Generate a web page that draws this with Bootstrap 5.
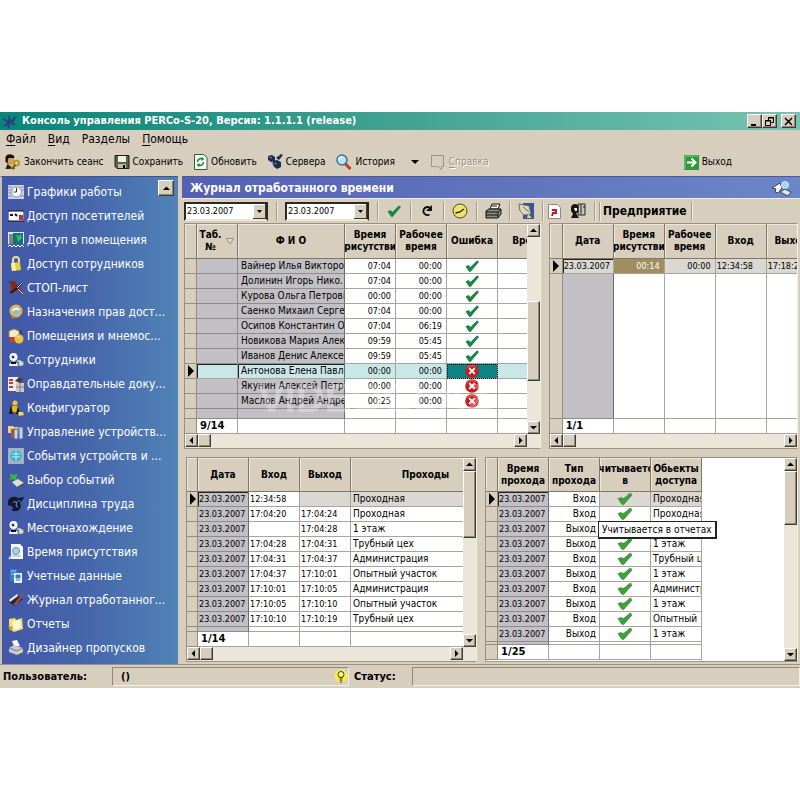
<!DOCTYPE html>
<html lang="ru">
<head>
<meta charset="utf-8">
<meta name="viewport" content="width=device-width, initial-scale=1">
<title>Консоль управления PERCo-S-20</title>
<link rel="stylesheet" href="https://cdn.jsdelivr.net/npm/bootstrap@5.3.0/dist/css/bootstrap.min.css">
<style>
:root{--face:#d8cebd;--line:#a8a59c;--dark:#6e675b}
body{background:#fff;padding:112px 0;font-family:"DejaVu Sans Condensed","DejaVu Sans",sans-serif;font-size:10px;line-height:14px;color:#000}
.app{background:var(--face)}
.titlebar{background:linear-gradient(90deg,#08857a,#3c9f8f 45%,#78c4b2);height:18px;color:#fff;font-size:11px;font-weight:700}
.face-btn{background:var(--face);border:1px solid;border-color:#fff #403c34 #403c34 #fff;box-shadow:inset -1px -1px 0 #8f8778;padding:0;display:flex;align-items:center;justify-content:center;flex:none;color:#000}
.win-btn{width:15px;height:14px}
.menu-row{gap:12px;padding:0 6px;height:18px}
.menu-link{font-size:12px;color:#000;text-decoration:none}
.menu-link u,.tool-btn u{text-underline-offset:2px}
.bar-tools{height:28px}
.tools-left{gap:10px}
.tool-btn{border:0;background:none;padding:0;display:flex;align-items:center;gap:3px;color:#000;font-size:10px;white-space:nowrap}
.tool-btn:disabled{color:#9b9384;text-shadow:1px 1px 0 #fff}
.exit-btn{margin-right:64px}
.side{width:178px;flex:none;background:linear-gradient(90deg,#4257a7,#4667ab 50%,#5083b6);border-left:2px solid #c9c2b4;padding:3px 0 4px 6px;border-top:1px solid #3d529c}
.side-link{display:flex;align-items:center;gap:3px;height:24px;color:#fff;text-decoration:none;font-size:12px;white-space:nowrap}
.side-up{position:absolute;right:4px;top:3px;width:16px;height:16px}
.section-bar{background:linear-gradient(90deg,#5461b3,#6c86c6);height:22px;color:#fff;font-size:12px;font-weight:700;border-top:1px solid #4b58a8}
.strip{height:25px;border-top:1px solid #f3eee4;padding-left:2px}
.date-box{width:84px;height:19px;border:2px solid;border-color:#2b2822 #2b2822 #eee6d8 #2b2822;border-radius:0;padding:0 0 0 1px;font-size:9px;line-height:14px;appearance:none;background:#fff url("data:image/svg+xml,%3Csvg xmlns='http://www.w3.org/2000/svg' width='13' height='15'%3E%3Cpath d='M0 0h13v15H0z' fill='%23403c34'/%3E%3Cpath d='M0 0h12v14H0z' fill='%23fff'/%3E%3Cpath d='M1 1h11v13H1z' fill='%23d8cebd'/%3E%3Cpath d='M4 6h5L6.500 9z'/%3E%3C/svg%3E") no-repeat right center}
.cell-btn{border:0;border-left:1px solid #a39b8c;box-shadow:inset 1px 0 0 #f1ebe0;background:none;height:19px;width:33px;padding:0;display:flex;align-items:center;justify-content:center}
.thin{width:24px}
.rule{width:1px;height:19px;background:#a39b8c;box-shadow:1px 0 0 #f1ebe0}
.org{font-size:12px;font-weight:700;padding-left:3px}
.row-a{padding:0 2px}
.row-b{padding:0 2px 2px 4px;margin-top:8px}
.pane{border:1px solid #988f7f;border-right-color:#f6f1e7;border-bottom-color:#a09683;min-width:0;background:#fff}
.pane-a{flex:357 1 0}.pane-b{flex:249 1 0}.pane-c{flex:290 1 0}.pane-d{flex:312 1 0}
.view{overflow:hidden;min-width:0;flex:1 1 0}
.sheet{table-layout:fixed;border-collapse:separate;border-spacing:0;width:0}
.sheet th,.sheet td{border-right:1px solid var(--line);border-bottom:1px solid var(--line);padding:0 3px;white-space:nowrap;overflow:hidden;line-height:12px}
.sheet th{background:var(--face);height:34px;font-weight:700;text-align:center;vertical-align:middle;padding:0;box-shadow:inset 1px 1px 0 #efe8dc;border-color:#7e776a}
.pane-top .sheet th{height:35px}
.sheet th>span{display:flex;flex-direction:column;align-items:center}
.sheet td{height:15px;background:#fff;vertical-align:middle}
.sheet td:first-child{background:var(--face);padding:0;border-color:#968d7e}
.sheet td.lock{background:#c2c0c4;border-color:#8d8b8e}
.sheet td.n{text-align:right;font-size:9px;padding:0 4px 0 0}
.sheet td.w{text-align:right}
.sheet td.d{font-size:9px;padding:0 1px}
.sheet td.c{text-align:center;padding:0}
.sheet td.o{padding:0 0 0 2px}
.sheet td.edge{border-right-color:#6d6b6e}
.sheet tr.now td.d,.sheet tr.now td.box{box-shadow:inset 1px 1px 0 #222}
.sheet tr.now td.plain{box-shadow:none}
.sheet tr.soft td:not(:first-child):not(.lock):not(.keep){background:#dbd7d1}
.sheet tr.pick td:not(:first-child){background:#c9e7e9}
.sheet tr.pick td.hot{background:#0f8285;outline:1px dotted #000;outline-offset:-1px}
.sheet tr.soft td.gold:not(:first-child):not(.lock):not(.keep){background:#a08d60;color:#fff}
.sheet tr.rest td{height:10px}
.sheet tr.tall td{height:145px}
.sheet tr.slim td{height:5px;line-height:1px}
.pane-d .sheet tr.slim td{height:3px}
.sheet tr.total td{font-family:"DejaVu Sans",sans-serif;font-size:10px;font-weight:700;background:#fff;height:15px}
.sheet tr.total td:first-child{background:var(--face)}
.sheet svg{display:block;margin:0 auto}
.vbar,.hbar{background:#ece6da;flex:none;display:flex}
.vbar{width:13px;flex-direction:column}
.hbar{height:14px}
.knob{width:13px;height:13px}
.corner{margin-right:13px}
.arr{width:7px;height:7px}
.gap-up{flex:65 1 0}.thumb-a{flex:79 1 0;width:13px}.gap-dn{flex:40 1 0}
.thumb-c{flex:66 1 0;width:13px}.gap-c{flex:97 1 0}
.thumb-d{flex:52 1 0;width:13px}.gap-d{flex:124 1 0}
.tip-box{position:absolute;left:112px;top:63px;background:#fff;border:1px solid #222;border-right-width:2px;border-bottom-width:2px;padding:0 3px;line-height:15px;white-space:nowrap}
.brandmark{position:absolute;left:76px;top:153px;font:700 40px/44px "Liberation Sans",sans-serif;color:#fff;opacity:.28;pointer-events:none}
.status{height:24px;border-top:1px solid #9b927f;font-size:11px;font-weight:700}
.well{border:1px solid;border-color:#8f8778 #f6f1e7 #f6f1e7 #8f8778;height:19px}
.well-user{width:237px}
.label-user{width:112px;padding-left:3px}
.label-stat{width:63px;padding-left:5px}
</style>
</head>
<body>
<svg width="0" height="0" class="d-none" aria-hidden="true">
<symbol id="ok" viewBox="0 0 14 13"><path d="M2 7.500 5 12.500 14 2 12 1 6 7z" fill="#51707c"/><path d="M.5 6.500 3.500 5 5.500 7 12 .5l1.500 1L5.500 11.500H4z" fill="#17893a"/></symbol>
<symbol id="ok2" viewBox="0 0 16 14"><path d="M3 8 6 13.500 15.500 3 14 2z" fill="#5c7b8c"/><path d="M.5 6.500 4 5 6.500 6.500 12.500 1 15 1.500 7.500 12 4.500 12.500z" fill="#3fa03a"/></symbol>
<symbol id="bad" viewBox="0 0 16 15"><circle cx="8" cy="7.500" r="7.300" fill="#c81e22"/><path d="M3 4a6 5 0 0 1 9-1" stroke="#ef7470" fill="none"/><path d="m5 4.500 6 6m0-6-6 6" stroke="#fff" stroke-width="2"/></symbol>
<symbol id="up" viewBox="0 0 7 7"><path d="M0 5h7L3.500 1.500z"/></symbol>
<symbol id="dn" viewBox="0 0 7 7"><path d="M0 2h7L3.500 5.500z"/></symbol>
<symbol id="lt" viewBox="0 0 7 7"><path d="M5 0v7L1.500 3.500z"/></symbol>
<symbol id="rt" viewBox="0 0 7 7"><path d="M2 0v7L5.500 3.500z"/></symbol>
<symbol id="mark-row" viewBox="0 0 7 12"><path d="M1 0v12l6-6z"/></symbol>
<symbol id="i-sched" viewBox="0 0 16 16"><path d="M0 1h16v14H0z" fill="#cbd3e4"/><path d="M0 3h4M0 6h4M0 9h4M0 12h4M12 3h4M12 6h4M12 12h4" stroke="#8791ad"/><circle cx="8.500" cy="8" r="5" fill="#fff" stroke="#8790a8"/><path d="M8.500 4v4H5.500" stroke="#333" fill="none"/></symbol>
<symbol id="i-guest" viewBox="0 0 16 16"><path d="M0 3h16v10H0z" fill="#fff" stroke="#111"/><path d="M2 7h3M7 6l2 2" stroke="#111" stroke-width="2"/><path d="M11 7h4v5h-4z" fill="#c22b44"/></symbol>
<symbol id="i-room" viewBox="0 0 16 16"><path d="M0 0h16v12H0z" fill="#dfeaf0"/><path d="M5 1h10v11H5z" fill="#16706b"/><path d="m8 2 2 2 3-2 1 4-4 4z" fill="#2fbd78"/><path d="M2 2v10M4 2v10" stroke="#123"/><path d="m0 14 2-1 2 2 2-2 2 2 2-2 2 2 2-2 2 2" stroke="#fff" fill="none"/></symbol>
<symbol id="i-lock" viewBox="0 0 16 16"><path d="M5 8V4c0-4 6-4 6 0v4" stroke="#e9dca0" stroke-width="2" fill="none"/><path d="m3 7 9-1 1 8-9 1z" fill="#eacb3c"/><path d="m3 7 4-.500 1 8-4 .5z" fill="#fbec96"/></symbol>
<symbol id="i-stop" viewBox="0 0 16 16"><path d="m1 1 6 0 2 4 5 6 1 4-4-3-4-3-4 4-2 0 3-5z" fill="#7e2c18"/><path d="m14 3-6 6-5 4" stroke="#201a1c" stroke-width="2"/><path d="M9 8 14 3M10 9l5 5" stroke="#ddd"/></symbol>
<symbol id="i-right" viewBox="0 0 16 16"><circle cx="8" cy="7" r="5" fill="#82bfe4" stroke="#e5b254" stroke-width="3"/><path d="M5 7c1-3 4-3 6-1" stroke="#fff" fill="none" stroke-width="2"/><path d="m3 11 1 4 4-2" fill="#c17a35"/></symbol>
<symbol id="i-map" viewBox="0 0 16 16"><path d="m1 3 5-2 5 2v6l-5 2-5-2z" fill="#f5edcf" stroke="#a08444"/><path d="M1 9h6v5H2z" fill="#b5472a"/><circle cx="11" cy="11" r="4.500" fill="#f0bf35"/><path d="M9 9a3 3 0 0 1 3 0" stroke="#fff"/><path d="M12 2l2 4" stroke="#222"/></symbol>
<symbol id="i-staff" viewBox="0 0 16 16"><circle cx="5.500" cy="5" r="4" fill="#fff"/><path d="M1 14c0-6 9-6 9 0z" fill="#f1f3f5"/><circle cx="5" cy="5" r="1.500" fill="#29406c"/><path d="M3 11h5" stroke="#111" stroke-width="2"/><circle cx="13" cy="11.500" r="2.500" fill="#d4d8a2"/><path d="M9 9h4" stroke="#fff"/></symbol>
<symbol id="i-doc" viewBox="0 0 16 16"><path d="M0 1h11v14H0z" fill="#f3ede6"/><path d="M1 4h4M1 7h4M1 11h4" stroke="#b33d3c" stroke-width="2"/><path d="m7 5 4-4 4 2-3 4z" fill="#4b3b3a"/><path d="M8 7h8v9H8z" fill="#c9c9c4"/><path d="M12 7v9M8 11h8" stroke="#8d7b75"/></symbol>
<symbol id="i-conf" viewBox="0 0 16 16"><circle cx="7" cy="3" r="2.500" fill="#f1ca29"/><path d="M4 6h6l1 6H4z" fill="#e9b912"/><path d="M3 5 1 14h4zM10 6l2 8H8z" fill="#161616"/><path d="m10 12 5 0 1 3-5 1z" fill="#f3dc4c"/></symbol>
<symbol id="i-dev" viewBox="0 0 16 16"><path d="M0 2h5l1 1h5v6H0z" fill="#efcf7a"/><path d="M3 5h6v9H3z" fill="#a7593a"/><path d="M6 5h4v10H6zM11 3h4v12h-4z" fill="#c7d4e6" stroke="#55698d"/></symbol>
<symbol id="i-ev" viewBox="0 0 16 16"><path d="M0 0h16v16H0z" fill="#a3b3bf"/><circle cx="8" cy="8" r="5.500" fill="#2eb0cf"/><path d="M4 6h8M4 9h8M8 3v10" stroke="#c9f4fa"/></symbol>
<symbol id="i-sel" viewBox="0 0 16 16"><path d="m2 1 3 2 5-1-2 3 1 4-4-2-4 1 2-3z" fill="#2fbc3d"/><path d="m4 10 6-3 6 4-7 4z" fill="#dcdcd2"/><path d="m9 15 7-4v2l-6 3z" fill="#47525e"/></symbol>
<symbol id="i-disc" viewBox="0 0 16 16"><path d="M0 5c2-5 7-5 10-3l6-1-2 4-2 1 1 5-3 4H4L5 11 0 9z" fill="#101a30"/><path d="m5 6 4 0-1 4 2 1M10 5l2 0" stroke="#7893b9" fill="none"/></symbol>
<symbol id="i-time" viewBox="0 0 16 16"><path d="M3 0h9l3 3v12H3z" fill="#f7f9fb"/><circle cx="8" cy="7" r="3.500" fill="#a5d1ec" stroke="#6c8eac"/><path d="m1 15 4-5" stroke="#c7d6e5" stroke-width="2"/><path d="M5 12h8" stroke="#9ab"/></symbol>
<symbol id="i-data" viewBox="0 0 16 16"><path d="M2 1h7v12H2z" fill="#2c82cb"/><path d="M3 3h5M3 6h5" stroke="#9fd2f5"/><path d="M6 5h8v10H6z" fill="#edf3f8"/><path d="M8 7h4v3H8zM8 12h4" fill="#3c7ab7" stroke="#3c7ab7"/></symbol>
<symbol id="i-jour" viewBox="0 0 16 16"><path d="m0 9 9-6 6 4-9 7z" fill="#212940"/><path d="m1 8 8-6 1 2-8 6z" fill="#e6e9ee"/><path d="m5 13 9-11 2 1-8 10z" fill="#b8473d"/></symbol>
<symbol id="i-rep" viewBox="0 0 16 16"><path d="m1 3 6-1 1 2 6-2 1 11-9 3-5-3z" fill="#f3dc72"/><path d="m4 5 8-1 1 8-7 2z" fill="#fffbd5"/><path d="m0 10 5 1-2 4z" fill="#c9982c"/></symbol>
<symbol id="i-print" viewBox="0 0 16 16"><path d="m4 1 5-1 3 6H6z" fill="#fff"/><path d="m1 8 5-3 9 3v4l-6 3-8-3z" fill="#c6cad0"/><path d="m1 8 8 3 6-3" stroke="#757c88" fill="none"/><path d="m9 12 5-2v2l-5 2z" fill="#eadb77"/></symbol>
<symbol id="t-key" viewBox="0 0 16 16"><path d="M1 3c2-4 8-3 9 0L9 5 5 4 4 10 1 8z" fill="#15110d"/><path d="M4 4h5l1 4-2 3H5L3 8z" fill="#d9a24a"/><path d="M1 15 3 10l4 3-1 2z" fill="#26231f"/><circle cx="12" cy="9" r="2.500" fill="none" stroke="#b89a1d" stroke-width="2"/><path d="m11 11-4 4m1-2 2 2" stroke="#73610c" stroke-width="2"/></symbol>
<symbol id="t-save" viewBox="0 0 16 16"><path d="M1 1.500h14v13H3l-2-2z" fill="#5b6442" stroke="#1c1f14"/><path d="M4 2h8v6H4z" fill="#eef0e4"/><path d="M4 10h8v4H4z" fill="#b9bdaa"/><path d="M9 11h2v3H9z"/></symbol>
<symbol id="t-upd" viewBox="0 0 14 16"><path d="M1 .5h9l3.500 3v12H1z" fill="#fbfff8" stroke="#3c5a43"/><path d="M4 8c0-3 3-4 5-3M10 8c0 3-3 4-5 3" stroke="#1b8a32" stroke-width="1.500" fill="none"/><path d="m8 3 3 2-3 2zM6 9v4l-3-2z" fill="#1b8a32"/></symbol>
<symbol id="t-srv" viewBox="0 0 16 16"><g fill="#1c2c4c"><path d="m1 2 4-1 3 2v4L4 8 1 6z"/><path d="m6 7 4-1 4 2v5l-4 2-4-3z"/><path d="m9 4 5-4 2 1-4 5z"/></g><path d="m2 3 3 1M7 9l3 1M5 8l2 5M10 3l3-2" stroke="#6f8dc0"/></symbol>
<symbol id="t-his" viewBox="0 0 16 16"><circle cx="6.500" cy="6" r="5" fill="#b6e3f5" stroke="#35708e" stroke-width="1.500"/><path d="M3 6c0-2 2-3 4-3" stroke="#fff" stroke-width="1.500" fill="none"/><path d="m10 10 5 5" stroke="#c23a24" stroke-width="3"/></symbol>
<symbol id="t-help" viewBox="0 0 16 16"><path d="M1.500 1.500h12v11h-2v3l-4-3h-6z" fill="none" stroke="#9b9384"/></symbol>
<symbol id="t-exit" viewBox="0 0 15 15"><path d="M0 0h15v15H0z" fill="#2f9a3c"/><path d="M1 1h13M1 1v13" stroke="#7fcf80"/><path d="M3 7.500h8M7.500 3.500l4 4-4 4" stroke="#fff" stroke-width="2" fill="none"/></symbol>
</svg>

<div class="app">
  <header>
    <div class="titlebar d-flex align-items-center pe-1">
      <svg width="18" height="16" viewBox="0 0 18 16" aria-hidden="true"><path d="M8 15 6 9 2 5l4 1 2 2 1-7 2 7 2-3 4-2-4 6-3 1-1 6z" fill="#243f86"/><path d="m4 13 4-3m3 0 4 2" stroke="#46386e" stroke-width="2"/></svg>
      <span class="flex-fill ms-1 text-nowrap">Консоль управления PERCo-S-20, Версия: 1.1.1.1 (release)</span>
      <button class="face-btn win-btn" aria-label="Свернуть"><svg width="9" height="9"><path d="M1 7h5v2H1z"/></svg></button>
      <button class="face-btn win-btn" aria-label="Восстановить"><svg width="9" height="9"><path d="M3.500 3V.5h5v5H6M3 1h6M.5 3.500h5v5h-5zM0 4h6" fill="none" stroke="#000"/></svg></button>
      <button class="face-btn win-btn ms-1" aria-label="Закрыть"><svg width="9" height="9"><path d="m1 1 7 7m0-7L1 8" stroke="#000" stroke-width="1.500"/></svg></button>
    </div>
    <nav class="menu-row d-flex align-items-center" aria-label="Главное меню">
      <a href="#" class="menu-link"><u>Ф</u>айл</a><a href="#" class="menu-link"><u>В</u>ид</a><a href="#" class="menu-link">Разделы</a><a href="#" class="menu-link"><u>П</u>омощь</a>
    </nav>
    <div class="d-flex align-items-center px-1 bar-tools">
      <div class="d-flex align-items-center tools-left">
        <button class="tool-btn"><svg width="17" height="16"><use href="#t-key"/></svg>Закончить сеанс</button>
        <button class="tool-btn"><svg width="16" height="16"><use href="#t-save"/></svg>Сохранить</button>
        <button class="tool-btn"><svg width="15" height="16"><use href="#t-upd"/></svg>Обновить</button>
        <button class="tool-btn"><svg width="16" height="16"><use href="#t-srv"/></svg>Сервера</button>
        <button class="tool-btn"><svg width="17" height="16"><use href="#t-his"/></svg>История<svg class="ms-2" width="14" height="7" viewBox="-4 0 10 7"><path d="M-1 1h8L3 5z"/></svg></button>
        <button class="tool-btn" disabled><svg width="16" height="16"><use href="#t-help"/></svg><span><u>С</u>правка</span></button>
      </div>
      <button class="tool-btn ms-auto exit-btn"><svg width="15" height="15"><use href="#t-exit"/></svg>Выход</button>
    </div>
  </header>

  <div class="d-flex">
    <aside class="side position-relative">
      <button class="face-btn side-up" aria-label="Вверх"><svg class="arr"><use href="#up"/></svg></button>
      <nav aria-label="Разделы">
        <a href="#" class="side-link"><svg width="16" height="16"><use href="#i-sched"/></svg>Графики работы</a>
        <a href="#" class="side-link"><svg width="16" height="16"><use href="#i-guest"/></svg>Доступ посетителей</a>
        <a href="#" class="side-link"><svg width="16" height="16"><use href="#i-room"/></svg>Доступ в помещения</a>
        <a href="#" class="side-link"><svg width="16" height="16"><use href="#i-lock"/></svg>Доступ сотрудников</a>
        <a href="#" class="side-link"><svg width="16" height="16"><use href="#i-stop"/></svg>СТОП-лист</a>
        <a href="#" class="side-link"><svg width="16" height="16"><use href="#i-right"/></svg>Назначения прав дост...</a>
        <a href="#" class="side-link"><svg width="16" height="16"><use href="#i-map"/></svg>Помещения и мнемос...</a>
        <a href="#" class="side-link"><svg width="16" height="16"><use href="#i-staff"/></svg>Сотрудники</a>
        <a href="#" class="side-link"><svg width="16" height="16"><use href="#i-doc"/></svg>Оправдательные доку...</a>
        <a href="#" class="side-link"><svg width="16" height="16"><use href="#i-conf"/></svg>Конфигуратор</a>
        <a href="#" class="side-link"><svg width="16" height="16"><use href="#i-dev"/></svg>Управление устройств...</a>
        <a href="#" class="side-link"><svg width="16" height="16"><use href="#i-ev"/></svg>События устройств и ...</a>
        <a href="#" class="side-link"><svg width="16" height="16"><use href="#i-sel"/></svg>Выбор событий</a>
        <a href="#" class="side-link"><svg width="16" height="16"><use href="#i-disc"/></svg>Дисциплина труда</a>
        <a href="#" class="side-link"><svg width="16" height="16"><use href="#i-staff"/></svg>Местонахождение</a>
        <a href="#" class="side-link"><svg width="16" height="16"><use href="#i-time"/></svg>Время присутствия</a>
        <a href="#" class="side-link"><svg width="16" height="16"><use href="#i-data"/></svg>Учетные данные</a>
        <a href="#" class="side-link"><svg width="16" height="16"><use href="#i-jour"/></svg>Журнал отработанног...</a>
        <a href="#" class="side-link"><svg width="16" height="16"><use href="#i-rep"/></svg>Отчеты</a>
        <a href="#" class="side-link"><svg width="16" height="16"><use href="#i-print"/></svg>Дизайнер пропусков</a>
      </nav>
    </aside>

    <main class="flex-fill ms-1 overflow-hidden">
      <div class="section-bar d-flex align-items-center px-2">
        <span class="flex-fill">Журнал отработанного времени</span>
        <svg width="20" height="16" viewBox="0 0 20 16" aria-hidden="true"><path d="m0 8 8-5 2 5-4 5-3-1 1-3z" fill="#fff" stroke="#35426c"/><circle cx="13" cy="5" r="3.500" fill="#9fd6ee" stroke="#dfe9f5"/><path d="m8 12 5-3 6 3-3 4z" fill="#dfe4ec" stroke="#35426c"/></svg>
      </div>
      <div class="strip d-flex align-items-center">
        <select class="date-box" aria-label="Дата начала"><option>23.03.2007</option></select>
        <span class="rule mx-2"></span>
        <select class="date-box" aria-label="Дата окончания"><option>23.03.2007</option></select>
        <span class="ms-2"></span>
        <button class="cell-btn" aria-label="Применить"><svg width="14" height="13"><use href="#ok"/></svg></button>
        <button class="cell-btn" aria-label="Обновить"><svg width="12" height="12" viewBox="0 0 12 12"><path d="M9.500 3.500a4 4 0 1 0-1 6" fill="none" stroke="#111" stroke-width="2"/><path d="M11 0v6H5z" fill="#111"/></svg></button>
        <button class="cell-btn" aria-label="Время"><svg width="16" height="16"><circle cx="8" cy="8" r="7" fill="#f0e468" stroke="#4a4520"/><path d="m3.500 10 4.500-1 4-3" stroke="#222" fill="none" stroke-width="1.300"/></svg></button>
        <button class="cell-btn" aria-label="Печать"><svg width="17" height="16" viewBox="0 0 17 16"><path d="M5 6 7 1h8l-2 5z" fill="#fff" stroke="#111"/><path d="m1 8 3-2h12v5l-3 4H1z" fill="#908a80" stroke="#111"/><path d="M1 9h12v5M1 12h12M13 9l3-3M7 3h5" stroke="#111" fill="none"/></svg></button>
        <button class="cell-btn" aria-label="Журнал"><svg width="16" height="16"><path d="M5 0h11v16H5z" fill="#36549c"/><path d="m1 1 10 2 2 8-7 1-4-4z" fill="#dcd8c6" stroke="#776f57"/><path d="m5 4 6 5" stroke="#6a654d"/><path d="m10 11 4 4h-5z" fill="#eed850"/></svg></button>
        <button class="cell-btn thin" aria-label="Документ"><svg width="13" height="15"><path d="M.5.5h9l3 3v11H.5z" fill="#fff" stroke="#8a8a8a"/><path d="M4 6h4v3H5l-1 3" stroke="#c01c28" stroke-width="2" fill="none"/></svg></button>
        <button class="cell-btn thin border-0 shadow-none" aria-label="Сотрудники"><svg width="16" height="16"><path d="M8 1h7v11H8z" fill="#c9c6be" stroke="#222"/><path d="M11 1v10M13 4h2" stroke="#222"/><path d="M1 4c1-4 7-4 8 0l-1 2 1 3-3 1 3 5H1l2-4-2-3z" fill="#151515"/><path d="M4 5h3v3H5z" fill="#eee"/></svg></button>
        <span class="rule ms-1"></span><span class="rule ms-1"></span>
        <span class="org">Предприятие</span>
        <span class="rule ms-1"></span>
      </div>

      <div class="d-flex gap-2 pane-top position-relative row-a">
        <section class="pane pane-a" aria-label="Сотрудники">
          <div class="d-flex">
            <div class="view">
              <table class="sheet">
                <colgroup><col style="width:12px"><col style="width:41px"><col style="width:107px"><col style="width:51px"><col style="width:51px"><col style="width:51px"><col style="width:62px"></colgroup>
                <thead><tr><th></th><th><div class="d-flex align-items-center justify-content-around"><div>Таб.<br>№</div><svg class="m-0" width="8" height="7"><path d="M.5.5h7L4 6z" fill="#e9e3d6" stroke="#948c7d"/></svg></div></th><th>Ф И О</th><th><span><b>Время</b><b>присутствия</b></span></th><th>Рабочее<br>время</th><th>Ошибка</th><th>Время</th></tr></thead>
                <tbody>
                <tr><td></td><td class="lock"></td><td class="lock edge">Вайнер Илья Викторович</td><td class="n">07:04</td><td class="n">00:00</td><td class="c"><svg width="14" height="13"><use href="#ok"/></svg></td><td></td></tr>
                <tr><td></td><td class="lock"></td><td class="lock edge">Долинин Игорь Нико.</td><td class="n">07:04</td><td class="n">00:00</td><td class="c"><svg width="14" height="13"><use href="#ok"/></svg></td><td></td></tr>
                <tr><td></td><td class="lock"></td><td class="lock edge">Курова Ольга Петровна</td><td class="n">00:00</td><td class="n">00:00</td><td class="c"><svg width="14" height="13"><use href="#ok"/></svg></td><td></td></tr>
                <tr><td></td><td class="lock"></td><td class="lock edge">Саенко Михаил Сергеевич</td><td class="n">07:04</td><td class="n">00:00</td><td class="c"><svg width="14" height="13"><use href="#ok"/></svg></td><td></td></tr>
                <tr><td></td><td class="lock"></td><td class="lock edge">Осипов Константин Олегович</td><td class="n">07:04</td><td class="n">06:19</td><td class="c"><svg width="14" height="13"><use href="#ok"/></svg></td><td></td></tr>
                <tr><td></td><td class="lock"></td><td class="lock edge">Новикова Мария Алексеевна</td><td class="n">09:59</td><td class="n">05:45</td><td class="c"><svg width="14" height="13"><use href="#ok"/></svg></td><td></td></tr>
                <tr><td></td><td class="lock"></td><td class="lock edge">Иванов Денис Алексеевич</td><td class="n">09:59</td><td class="n">05:45</td><td class="c"><svg width="14" height="13"><use href="#ok"/></svg></td><td></td></tr>
                <tr class="now pick"><td><svg width="7" height="12"><use href="#mark-row"/></svg></td><td class="box"></td><td class="box edge">Антонова Елена Павловна</td><td class="n">00:00</td><td class="n">00:00</td><td class="c hot"><svg width="16" height="14"><use href="#bad"/></svg></td><td></td></tr>
                <tr><td></td><td class="lock"></td><td class="lock edge">Якунин Алексей Петрович</td><td class="n">00:00</td><td class="n">00:00</td><td class="c"><svg width="16" height="14"><use href="#bad"/></svg></td><td></td></tr>
                <tr><td></td><td class="lock"></td><td class="lock edge">Маслов Андрей Андреевич</td><td class="n">00:25</td><td class="n">00:00</td><td class="c"><svg width="16" height="14"><use href="#bad"/></svg></td><td></td></tr>
                <tr class="rest"><td></td><td class="lock"></td><td class="lock edge"></td><td></td><td></td><td></td><td></td></tr>
                <tr class="total"><td></td><td>9/14</td><td></td><td></td><td></td><td></td><td></td></tr>
                </tbody>
              </table>
            </div>
            <div class="vbar"><button class="face-btn knob" aria-label="Вверх"><svg class="arr"><use href="#up"/></svg></button><span class="gap-up"></span><span class="face-btn thumb-a"></span><span class="gap-dn"></span><button class="face-btn knob" aria-label="Вниз"><svg class="arr"><use href="#dn"/></svg></button></div>
          </div>
          <div class="hbar"><button class="face-btn knob" aria-label="Влево"><svg class="arr"><use href="#lt"/></svg></button><span class="face-btn knob"></span><span class="flex-fill"></span><button class="face-btn knob corner" aria-label="Вправо"><svg class="arr"><use href="#rt"/></svg></button></div>
        </section>
        <section class="pane pane-b" aria-label="Предприятие">
          <div class="view">
            <table class="sheet">
              <colgroup><col style="width:13px"><col style="width:51px"><col style="width:51px"><col style="width:51px"><col style="width:51px"><col style="width:51px"></colgroup>
              <thead><tr><th></th><th>Дата</th><th><span><b>Время</b><b>присутствия</b></span></th><th>Рабочее<br>время</th><th>Вход</th><th>Выход</th></tr></thead>
              <tbody>
              <tr class="now soft"><td><svg width="7" height="12"><use href="#mark-row"/></svg></td><td class="d">23.03.2007</td><td class="n gold">00:14</td><td class="n">00:00</td><td class="d plain">12:34:58</td><td class="d plain">17:18:22</td></tr>
              <tr class="tall"><td></td><td class="lock edge"></td><td></td><td></td><td></td><td></td></tr>
              <tr class="total"><td></td><td>1/1</td><td></td><td></td><td></td><td></td></tr>
              </tbody>
            </table>
          </div>
          <div class="hbar"><button class="face-btn knob" aria-label="Влево"><svg class="arr"><use href="#lt"/></svg></button><span class="face-btn knob"></span><span class="flex-fill"></span><button class="face-btn knob" aria-label="Вправо"><svg class="arr"><use href="#rt"/></svg></button></div>
        </section>
        <div class="brandmark" aria-hidden="true">VIDEOGLAZ</div>
      </div>

      <div class="d-flex gap-2 row-b">
        <section class="pane pane-c" aria-label="Проходы">
          <div class="d-flex">
            <div class="view">
              <table class="sheet">
                <colgroup><col style="width:11px"><col style="width:51px"><col style="width:51px"><col style="width:51px"><col style="width:150px"></colgroup>
                <thead><tr><th></th><th>Дата</th><th>Вход</th><th>Выход</th><th>Проходы</th></tr></thead>
                <tbody>
                <tr class="now soft"><td><svg width="7" height="12"><use href="#mark-row"/></svg></td><td class="d lock edge">23.03.2007</td><td class="d plain keep">12:34:58</td><td></td><td class="o">Проходная</td></tr>
                <tr><td></td><td class="d lock edge">23.03.2007</td><td class="d">17:04:20</td><td class="d">17:04:24</td><td class="o">Проходная</td></tr>
                <tr><td></td><td class="d lock edge">23.03.2007</td><td></td><td class="d">17:04:28</td><td class="o">1 этаж</td></tr>
                <tr><td></td><td class="d lock edge">23.03.2007</td><td class="d">17:04:28</td><td class="d">17:04:31</td><td class="o">Трубный цех</td></tr>
                <tr><td></td><td class="d lock edge">23.03.2007</td><td class="d">17:04:31</td><td class="d">17:04:37</td><td class="o">Администрация</td></tr>
                <tr><td></td><td class="d lock edge">23.03.2007</td><td class="d">17:04:37</td><td class="d">17:10:01</td><td class="o">Опытный участок</td></tr>
                <tr><td></td><td class="d lock edge">23.03.2007</td><td class="d">17:10:01</td><td class="d">17:10:05</td><td class="o">Администрация</td></tr>
                <tr><td></td><td class="d lock edge">23.03.2007</td><td class="d">17:10:05</td><td class="d">17:10:10</td><td class="o">Опытный участок</td></tr>
                <tr><td></td><td class="d lock edge">23.03.2007</td><td class="d">17:10:10</td><td class="d">17:10:19</td><td class="o">Трубный цех</td></tr>
                <tr class="slim"><td></td><td class="lock edge"></td><td></td><td></td><td></td></tr>
                <tr class="total"><td></td><td>1/14</td><td></td><td></td><td></td></tr>
                </tbody>
              </table>
            </div>
            <div class="vbar"><button class="face-btn knob" aria-label="Вверх"><svg class="arr"><use href="#up"/></svg></button><span class="face-btn thumb-c"></span><span class="gap-c"></span><button class="face-btn knob" aria-label="Вниз"><svg class="arr"><use href="#dn"/></svg></button></div>
          </div>
          <div class="hbar"><button class="face-btn knob" aria-label="Влево"><svg class="arr"><use href="#lt"/></svg></button><span class="face-btn knob"></span><span class="flex-fill"></span><button class="face-btn knob corner" aria-label="Вправо"><svg class="arr"><use href="#rt"/></svg></button></div>
        </section>
        <section class="pane pane-d d-flex position-relative" aria-label="Объекты доступа">
          <div class="view">
            <table class="sheet">
              <colgroup><col style="width:12px"><col style="width:51px"><col style="width:51px"><col style="width:51px"><col style="width:51px"></colgroup>
              <thead><tr><th></th><th>Время<br>прохода</th><th>Тип<br>прохода</th><th><span><b>Учитывается</b><b>в</b></span></th><th>Обьекты<br>доступа</th></tr></thead>
              <tbody>
              <tr class="now soft"><td><svg width="7" height="12"><use href="#mark-row"/></svg></td><td class="d lock edge">23.03.2007</td><td class="w keep">Вход</td><td class="c"><svg width="16" height="14"><use href="#ok2"/></svg></td><td class="o">Проходная</td></tr>
              <tr><td></td><td class="d lock edge">23.03.2007</td><td class="w">Вход</td><td class="c"><svg width="16" height="14"><use href="#ok2"/></svg></td><td class="o">Проходная</td></tr>
              <tr><td></td><td class="d lock edge">23.03.2007</td><td class="w">Выход</td><td></td><td></td></tr>
              <tr><td></td><td class="d lock edge">23.03.2007</td><td class="w">Выход</td><td class="c"><svg width="16" height="14"><use href="#ok2"/></svg></td><td class="o">1 этаж</td></tr>
              <tr><td></td><td class="d lock edge">23.03.2007</td><td class="w">Вход</td><td class="c"><svg width="16" height="14"><use href="#ok2"/></svg></td><td class="o">Трубный цех</td></tr>
              <tr><td></td><td class="d lock edge">23.03.2007</td><td class="w">Выход</td><td class="c"><svg width="16" height="14"><use href="#ok2"/></svg></td><td class="o">1 этаж</td></tr>
              <tr><td></td><td class="d lock edge">23.03.2007</td><td class="w">Вход</td><td class="c"><svg width="16" height="14"><use href="#ok2"/></svg></td><td class="o">Администрация</td></tr>
              <tr><td></td><td class="d lock edge">23.03.2007</td><td class="w">Выход</td><td class="c"><svg width="16" height="14"><use href="#ok2"/></svg></td><td class="o">1 этаж</td></tr>
              <tr><td></td><td class="d lock edge">23.03.2007</td><td class="w">Вход</td><td class="c"><svg width="16" height="14"><use href="#ok2"/></svg></td><td class="o">Опытный</td></tr>
              <tr><td></td><td class="d lock edge">23.03.2007</td><td class="w">Выход</td><td class="c"><svg width="16" height="14"><use href="#ok2"/></svg></td><td class="o">1 этаж</td></tr>
              <tr class="slim"><td></td><td class="lock edge"></td><td></td><td></td><td></td></tr>
              <tr class="total"><td></td><td>1/25</td><td></td><td></td><td></td></tr>
              </tbody>
            </table>
          </div>
          <div class="vbar"><button class="face-btn knob" aria-label="Вверх"><svg class="arr"><use href="#up"/></svg></button><span class="face-btn thumb-d"></span><span class="gap-d"></span><button class="face-btn knob" aria-label="Вниз"><svg class="arr"><use href="#dn"/></svg></button></div>
          <div class="tip-box" role="tooltip">Учитывается в отчетах</div>
        </section>
      </div>
    </main>
  </div>

  <footer class="status d-flex align-items-center">
    <span class="label-user">Пользователь:</span>
    <div class="well well-user d-flex align-items-center justify-content-between ps-2"><span>()</span><svg width="14" height="15" viewBox="0 0 14 15" aria-hidden="true"><circle cx="7" cy="7" r="6.500" fill="#f3ee4e"/><circle cx="7" cy="5.500" r="3" fill="#fffca0" stroke="#3a3510"/><path d="M5.500 9h3M5.500 11h3M6 13h2" stroke="#3a3510"/></svg></div>
    <span class="label-stat">Статус:</span>
    <div class="well flex-fill"></div>
  </footer>
</div>
<script src="https://cdn.jsdelivr.net/npm/bootstrap@5.3.0/dist/js/bootstrap.bundle.min.js"></script>
</body>
</html>
